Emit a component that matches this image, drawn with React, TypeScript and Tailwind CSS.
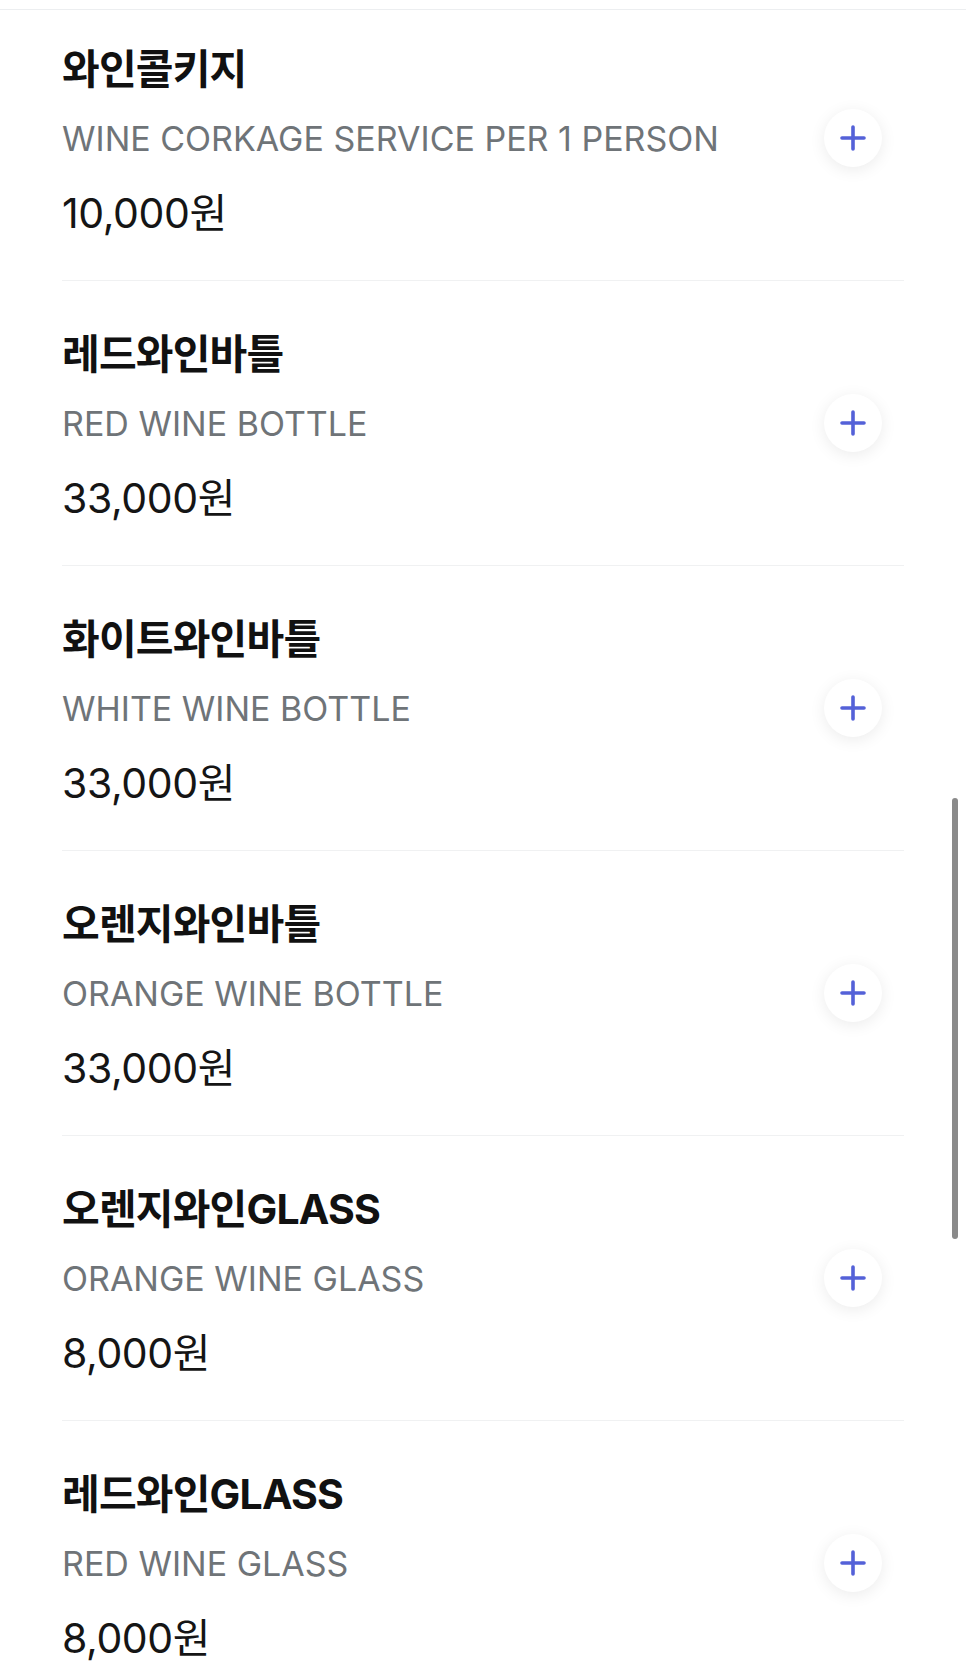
type Item = { name: string; sub: string; price: string };

const items: Item[] = [
  { name: '와인콜키지', sub: 'WINE CORKAGE SERVICE PER 1 PERSON', price: '10,000원' },
  { name: '레드와인바틀', sub: 'RED WINE BOTTLE', price: '33,000원' },
  { name: '화이트와인바틀', sub: 'WHITE WINE BOTTLE', price: '33,000원' },
  { name: '오렌지와인바틀', sub: 'ORANGE WINE BOTTLE', price: '33,000원' },
  { name: '오렌지와인GLASS', sub: 'ORANGE WINE GLASS', price: '8,000원' },
  { name: '레드와인GLASS', sub: 'RED WINE GLASS', price: '8,000원' },
];

const font = { fontFamily: 'Inter, "Noto Sans CJK KR", sans-serif' };

function PlusIcon() {
  return (
    <svg width="26" height="26" viewBox="0 0 26 26" fill="none">
      <path d="M13 2v22M2 13h22" stroke="#5461d8" strokeWidth="3.6" strokeLinecap="round" />
    </svg>
  );
}

function MenuRow({ item, first }: { item: Item; first: boolean }) {
  return (
    <div
      className={`flex items-center justify-between border-b border-[#f0f1f2] pr-[22px] ${
        first ? 'h-[271px] pb-[14px]' : 'h-[285px]'
      }`}
    >
      <div className="mt-[6px] flex flex-col">
        <div className="text-[41px] leading-[50px] font-bold tracking-[-0.02em] text-[#111]">{item.name}</div>
        <div className="mt-[20px] text-[34px] leading-[50px] text-[#6f7478]">{item.sub}</div>
        <div className="mt-[24px] text-[41px] leading-[50px] tracking-[-0.01em] text-[#151515]">{item.price}</div>
      </div>

      {/* add button */}
      <button className="flex h-[58px] w-[58px] items-center justify-center rounded-full bg-white shadow-[0_3px_16px_rgba(0,0,0,0.08)]">
        <PlusIcon />
      </button>
    </div>
  );
}

export default function App() {
  return (
    <div className="relative h-[1664px] overflow-hidden bg-white" style={font}>
      <div className="h-[10px] border-b border-[#eceef0]" />

      <div className="px-[62px]">
        {items.map((item, i) => (
          <MenuRow key={i} item={item} first={i === 0} />
        ))}
      </div>

      {/* overlay scrollbar */}
      <div className="absolute right-[8px] top-[798px] h-[441px] w-[6px] rounded-full bg-[#8a8a8a]" />
    </div>
  );
}
